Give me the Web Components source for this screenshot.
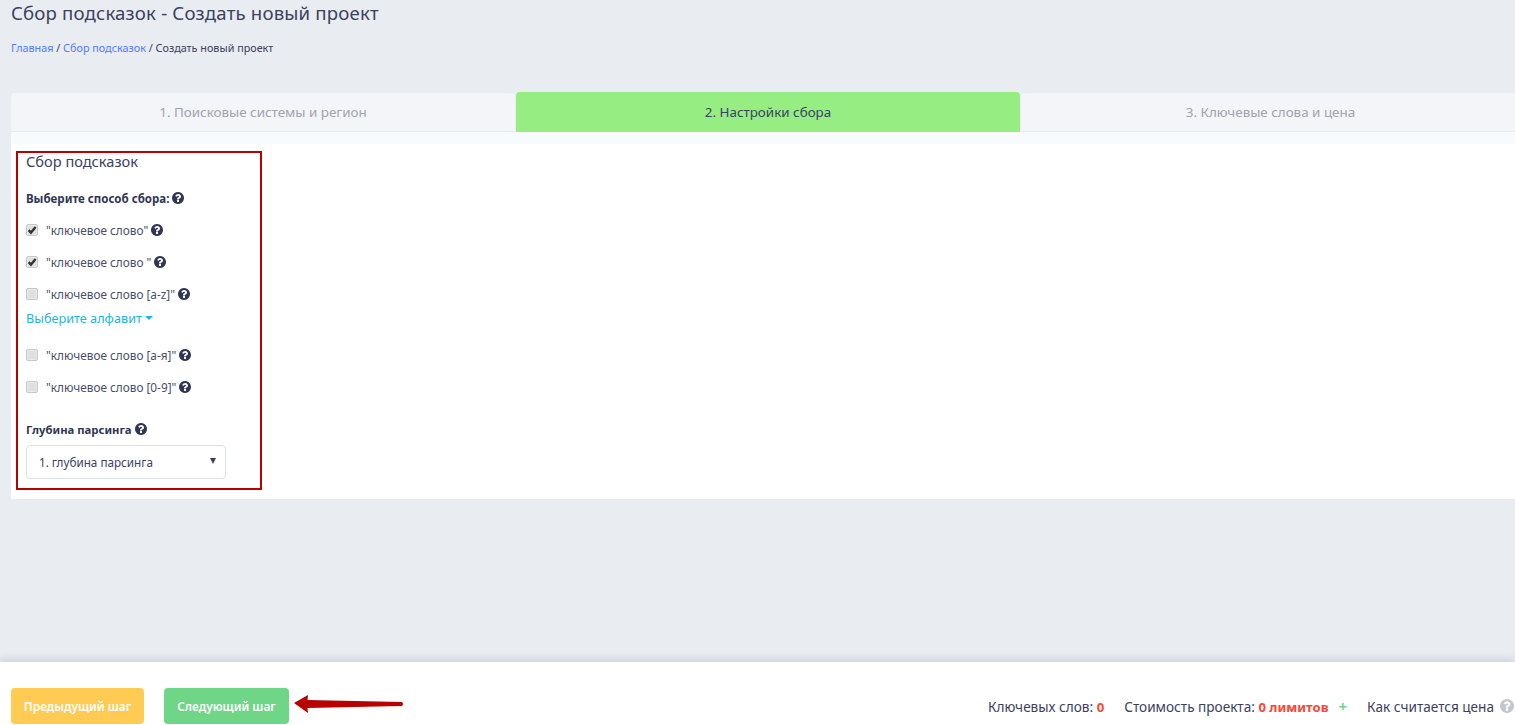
<!DOCTYPE html>
<html lang="ru"><head><meta charset="utf-8"><title>Сбор подсказок</title>
<style>
html,body{margin:0;height:100%;overflow:hidden}
body{background:#e9ecf1;font-family:"Noto Sans","Open Sans",sans-serif;color:#3c4160}
</style></head><body>
<app-page></app-page>
<script>
const Q='M1024 1376v-192q0-14-9-23t-23-9h-192q-14 0-23 9t-9 23v192q0 14 9 23t23 9h192q14 0 23-9t9-23zm256-672q0-88-55.5-163t-138.5-116-170-41q-243 0-371 213-15 24 8 42l132 100q7 6 19 6 16 0 25-12 53-68 86-92 34-24 86-24 48 0 85.5 26t37.5 59q0 38-20 61t-68 45q-63 28-115.5 86.5t-52.5 125.5v36q0 14 9 23t23 9h192q14 0 23-9t9-23q0-19 21.5-49.5t54.5-49.5q32-18 49-28.5t46-35 44.5-48 28-60.5 12.5-81zm384 192q0 209-103 385.5t-279.5 279.5-385.5 103-385.5-103-279.5-279.5-103-385.5 103-385.5 279.5-279.5 385.5-103 385.5 103 279.5 279.5 103 385.5z';
function def(name,html){customElements.define(name,class extends HTMLElement{
  constructor(){super();this.attachShadow({mode:'open'}).innerHTML=html;}
});}
def('help-icon',`<style>:host{display:inline-flex;vertical-align:middle;color:#2f3553}svg{width:var(--help-size,12px);height:var(--help-size,12px);display:block}</style><svg viewBox="128 128 1536 1536" fill="currentColor"><path d="${Q}"/></svg>`);
def('check-row',`<style>
:host{display:flex;align-items:center;height:18px;font-size:11.8px;color:#4b4f69}
.b{width:12px;height:12px;box-sizing:border-box;border:1px solid #c8c8c8;border-radius:2px;background:#e0e0e0;display:flex;align-items:center;justify-content:center;margin-right:8px;box-shadow:inset 0 0 0 1px #e9e9e9}
svg{width:10px;height:10px;display:none}
:host([checked]) svg{display:block}
help-icon{margin-left:3px}
</style><span class="b"><svg viewBox="0 0 10 10"><path d="M1.6 5.2 3.9 7.6 8.6 2" fill="none" stroke="#333" stroke-width="2.4"/></svg></span><slot></slot><help-icon></help-icon>`);
def('wizard-tabs',`<style>
:host{display:grid;grid-template-columns:504px 504px 499px;column-gap:1px;height:39px;font-size:13.4px;color:#a0a3b2}
div{display:flex;align-items:center;justify-content:center;background:#f4f5f8;border-bottom:1px solid #e8ebee;border-radius:4px 4px 0 0;box-sizing:border-box}
.a{background:#96ee82;color:#3c4160;border-bottom:0;margin-top:-1px}
</style><div>1. Поисковые системы и регион</div><div class="a">2. Настройки сбора</div><div>3. Ключевые слова и цена</div>`);
def('collect-panel',`<style>
:host{display:block;width:246px;height:339px;box-sizing:border-box;border:2px solid #b90000;padding:0 8px;font-size:11.5px}
h3{margin:-1px 0 0;font-weight:400;font-size:14.6px;line-height:18px;color:#3c4160}
.l{font-weight:700;color:#2f3553;display:flex;align-items:center;height:18px;gap:3px}
.lnk{color:#1cb6dc;font-size:12.7px;display:flex;align-items:center;height:18px;margin-top:6px}
.lnk i{display:block;margin-left:3px;border:4.5px solid transparent;border-top-color:#1cb6dc;border-bottom:0}
.sel{margin-top:7px;width:200px;height:34px;box-sizing:border-box;border:1px solid #dde1ea;border-radius:4px;display:flex;align-items:center;justify-content:space-between;padding:0 9px 0 12px;color:#3c4160;background:#fff;font-size:11.7px}
.sel i{display:block;border:3.5px solid transparent;border-top:6px solid #3c4160;border-bottom:0;margin-top:-2px}
</style>
<h3>Сбор подсказок</h3>
<div class="l" style="margin-top:19px">Выберите способ сбора: <help-icon></help-icon></div>
<check-row checked style="margin-top:14px">"ключевое слово"</check-row>
<check-row checked style="margin-top:14px">"ключевое слово "</check-row>
<check-row style="margin-top:14px">"ключевое слово [a-z]"</check-row>
<div class="lnk">Выберите алфавит<i></i></div>
<check-row style="margin-top:19px">"ключевое слово [а-я]"</check-row>
<check-row style="margin-top:14px">"ключевое слово [0-9]"</check-row>
<div class="l" style="margin-top:24px;font-size:11.3px">Глубина парсинга <help-icon></help-icon></div>
<div class="sel">1. глубина парсинга<i></i></div>`);
def('bottom-bar',`<style>
:host{display:flex;align-items:flex-start;height:63px;background:#fff;box-shadow:0 -2px 8px rgba(120,130,150,.28);padding:26px 0 0 11px;box-sizing:border-box;font-size:13.6px;color:#3c4160;position:relative}
.btn{height:36px;border-radius:4px;color:#fff;font-weight:600;font-size:11.9px;display:flex;align-items:center;justify-content:center;box-sizing:border-box}
.y{width:133px;background:#ffcb52}.g{width:125px;background:#6fd687;margin-left:20px}
svg.arrow{width:112px;height:24px;margin:6px 0 0 5px;display:block}
.right{margin-left:auto;display:flex;align-items:center;height:36px;white-space:nowrap;margin-right:1px}
b{color:#ff4438;font-weight:700;font-size:13.1px}.plus{color:#6fd687;font-weight:700;font-size:15px;margin:0 20px 0 10px}
help-icon{color:#c3c6d0;margin-left:6px;--help-size:14px}
</style>
<div class="btn y">Предыдущий шаг</div><div class="btn g">Следующий шаг</div>
<svg class="arrow" viewBox="0 0 112 24"><path d="M0 9 14 1 13.5 6 108 8Q110 10 108 12L13.5 14 14 19Z" fill="#b90000"/></svg>
<div class="right"><span>Ключевых слов:&nbsp;<b>0</b></span><span style="margin-left:20px">Стоимость проекта:&nbsp;<b>0 лимитов</b></span><span class="plus">+</span><span>Как считается цена</span><help-icon></help-icon></div>`);
def('app-page',`<style>
:host{display:flex;flex-direction:column;height:725px;width:1515px;overflow:hidden}
main{flex:1;padding:0 0 0 11px;min-height:0;overflow:hidden}
h1{margin:0;font-weight:400;font-size:18.6px;letter-spacing:.18px;line-height:24px;color:#3c4160;height:24px;margin-top:1px}
.bc{font-size:10.8px;line-height:14px;margin-top:16px;color:#3c4160}
.bc a{color:#4f7dff;text-decoration:none}
wizard-tabs{margin-top:38px}
.strip{height:12px;background:#f7fbfe}
.card{background:#fff;height:355px;padding:7px 0 0 5px;box-sizing:border-box}
</style>
<main>
<h1>Сбор подсказок - Создать новый проект</h1>
<div class="bc"><a>Главная</a> / <a>Сбор подсказок</a> / Создать новый проект</div>
<wizard-tabs></wizard-tabs>
<div class="strip"></div>
<div class="card"><collect-panel></collect-panel></div>
</main>
<bottom-bar></bottom-bar>`);
</script>
</body></html>
